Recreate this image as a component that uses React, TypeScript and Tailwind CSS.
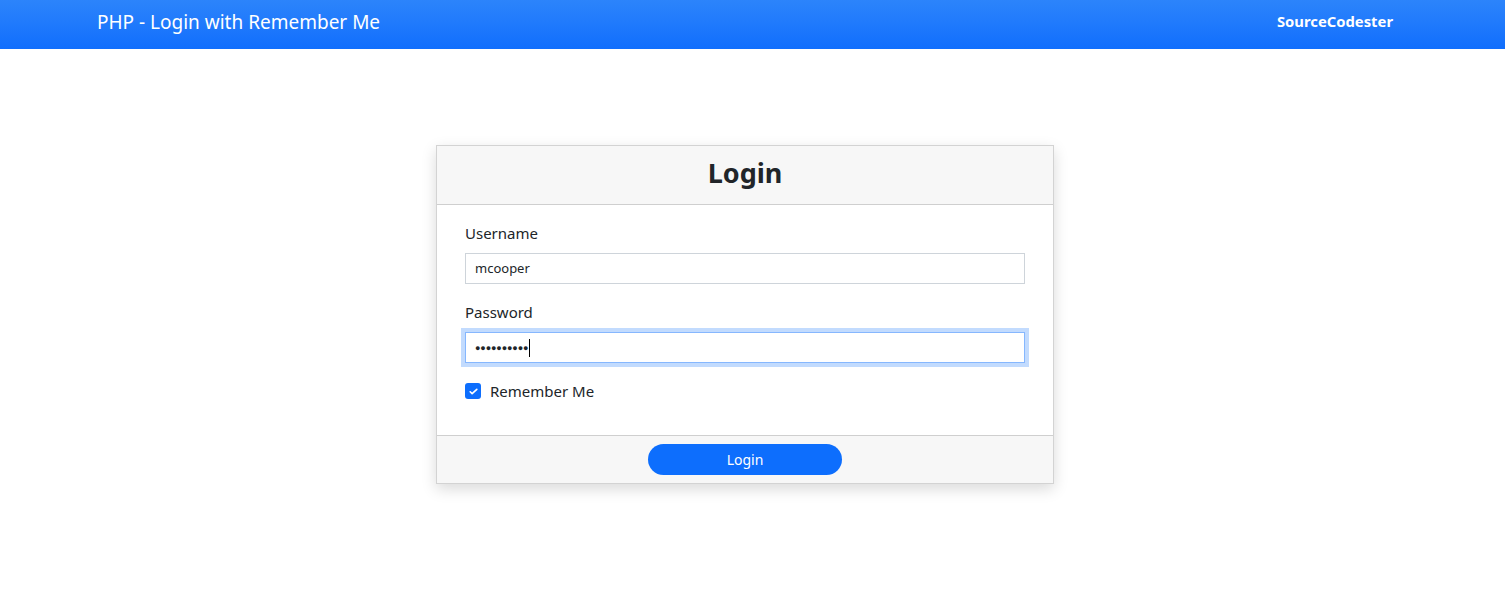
export default function App() {
  return (
    <div className="min-h-screen bg-white text-[#212529]" style={{ fontFamily: '"Noto Sans", "Open Sans", sans-serif' }}>
      {/* Navbar */}
      <nav className="h-[49px] bg-gradient-to-b from-[#2c84fb] to-[#106efd]">
        <div className="w-[1490px] h-full px-[97px] flex items-center justify-between">
          <span className="text-white text-[19px] leading-none -mt-[5px]">PHP - Login with Remember Me</span>
          <span className="text-white text-[14.8px] font-bold leading-none -mt-[6px]">SourceCodester</span>
        </div>
      </nav>

      {/* Login card */}
      <div className="w-[1490px] pt-[96px]">
        <div className="mx-auto w-[618px] border border-[#d3d3d3] bg-white shadow-[0_5px_14px_rgba(0,0,0,0.15)]">
          <div className="h-[59px] bg-[#f7f7f7] border-b border-[#cfcfcf] flex items-center justify-center">
            <h1 className="text-[27px] font-bold text-[#212529] leading-none -mt-[6px]">Login</h1>
          </div>

          <div className="px-[28px] pt-[16px] pb-[32px]">
            <label className="block text-[15px] leading-[24px] mb-[8px]">Username</label>
            <div className="h-[31px] border border-[#ced4da] flex items-center px-[9px] text-[13px]">mcooper</div>

            <label className="block text-[15px] leading-[24px] mt-[16px] mb-[8px]">Password</label>
            <div className="h-[31px] border border-[#86b7fe] ring-4 ring-[#c2dbfe] flex items-center px-[9px]">
              <span className="text-[9px] tracking-[-0.1px] leading-none text-[#212529]">●●●●●●●●●●</span>
              <span className="w-px h-[18px] bg-black ml-[1px]" />
            </div>

            <div className="mt-[16px] h-[24px] flex items-center gap-[9px]">
              <span className="w-[16px] h-[16px] rounded-[3px] bg-[#0d6efd] flex items-center justify-center">
                <svg width="11" height="11" viewBox="0 0 20 20" fill="none">
                  <path d="M4 10.5l3.5 3.5L16 6" stroke="white" strokeWidth="3" strokeLinecap="round" strokeLinejoin="round" />
                </svg>
              </span>
              <span className="text-[15px]">Remember Me</span>
            </div>
          </div>

          <div className="h-[48px] bg-[#f7f7f7] border-t border-[#cfcfcf] flex items-start justify-center pt-[8px]">
            <button className="w-[194px] h-[31px] rounded-full bg-[#0d6efd] text-white text-[14px] leading-none">Login</button>
          </div>
        </div>
      </div>
    </div>
  );
}
